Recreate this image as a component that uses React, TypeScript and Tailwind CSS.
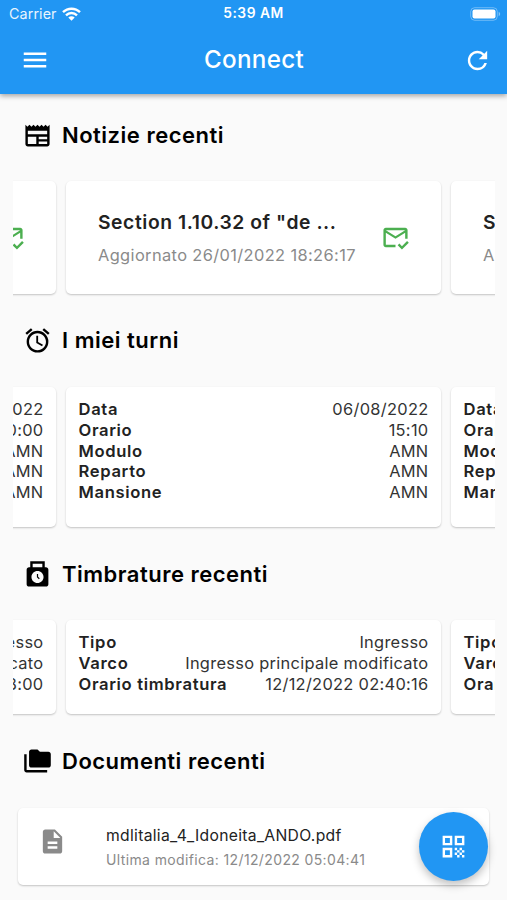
import React from "react";
import {
  MdAlarm,
  MdDescription,
  MdFolderCopy,
  MdMenu,
  MdNewspaper,
  MdOutlineMarkEmailRead,
  MdPunchClock,
  MdQrCode,
  MdRefresh,
} from "react-icons/md";

interface Row {
  label: string;
  value: string;
}

interface News {
  title: string;
  updated: string;
}

const news: News[] = [
  { title: 'Section 1.10.32 of "de ...', updated: "Aggiornato 26/01/2022 18:26:17" },
  { title: 'Section 1.10.32 of "de ...', updated: "Aggiornato 26/01/2022 18:26:17" },
  { title: 'Section 1.10.32 of "de ...', updated: "Aggiornato 26/01/2022 18:26:17" },
];

const makeShift = (date: string, time: string): Row[] => [
  { label: "Data", value: date },
  { label: "Orario", value: time },
  { label: "Modulo", value: "AMN" },
  { label: "Reparto", value: "AMN" },
  { label: "Mansione", value: "AMN" },
];

const makeStamp = (time: string): Row[] => [
  { label: "Tipo", value: "Ingresso" },
  { label: "Varco", value: "Ingresso principale modificato" },
  { label: "Orario timbratura", value: time },
];

const shifts = [makeShift("05/08/2022", "20:00"), makeShift("06/08/2022", "15:10"), makeShift("07/08/2022", "15:10")];
const stamps = [makeStamp("12/12/2022 02:48:00"), makeStamp("12/12/2022 02:40:16"), makeStamp("12/12/2022 02:38:00")];

const cardClasses = "bg-white rounded-[5px] shadow-[0_1px_2px_rgba(0,0,0,0.22)]";

function StatusBar() {
  return (
    <div className="grid grid-cols-3 items-center h-[27px] pl-[9px] pr-[6px] text-[14px] leading-none">
      <div className="flex items-center gap-[5px] pt-px">
        <span className="tracking-[0.1px] text-[14.3px] opacity-90">Carrier</span>
        <svg width="19" height="14" viewBox="0 0 19 14" fill="none" stroke="currentColor" strokeWidth="2.4">
          <path d="M1 5.2C5.8.5 13.2.5 18 5.2" />
          <path d="M4 8.3c3.1-3 7.900-3 11 0" />
          <path d="M9.500 13.700 6.300 10.500c1.800-1.700 4.600-1.700 6.400 0z" fill="currentColor" stroke="none" />
        </svg>
      </div>
      <span className="-ml-[3px] pt-px text-center font-semibold text-[13.8px] tracking-[0.5px]">5:39 AM</span>
      <div className="flex justify-end">
        <svg width="31" height="14" viewBox="0 0 31 14" fill="none">
          <rect x="0.700" y="0.700" width="26.600" height="12.600" rx="4" stroke="white" strokeOpacity="0.35" />
          <rect x="2.500" y="2.500" width="23" height="9" rx="2" fill="white" />
          <path d="M28.700 4.800c2 .8 2 3.600 0 4.400z" fill="white" fillOpacity="0.45" />
        </svg>
      </div>
    </div>
  );
}

function SectionTitle({ icon, children }: { icon: React.ReactNode; children: React.ReactNode }) {
  return (
    <div className="flex items-center gap-[10px] h-8 pl-[23px] text-black">
      {icon}
      <h2 className="text-[22px] leading-8 font-semibold tracking-[0.5px] whitespace-nowrap">{children}</h2>
    </div>
  );
}

function Carousel({ children }: { children: React.ReactNode }) {
  return <div className="flex justify-center gap-[10px] mx-[12.5px] pt-1 pb-1 overflow-hidden">{children}</div>;
}

function NewsCard({ title, updated }: News) {
  return (
    <div className={`${cardClasses} w-[375px] h-[113px] shrink-0 flex items-center justify-between pl-8 pr-[31px]`}>
      <div className="whitespace-nowrap pt-px">
        <p className="text-[19.3px] leading-6 font-semibold tracking-[0.57px]">{title}</p>
        <p className="mt-[11px] text-[16.4px] leading-[21px] tracking-[0.38px] text-[#8a8a8a]">{updated}</p>
      </div>
      <MdOutlineMarkEmailRead size={29} className="text-[#4caf50]" />
    </div>
  );
}

function RowsCard({ rows, className }: { rows: Row[]; className: string }) {
  return (
    <div className={`${cardClasses} ${className} w-[375px] shrink-0 px-[12.5px] pt-3`}>
      {rows.map((row) => (
        <div key={row.label} className="flex justify-between text-[16.4px] leading-[20.75px] whitespace-nowrap">
          <span className="text-[16.6px] font-semibold tracking-[0.66px]">{row.label}</span>
          <span className="tracking-[0.3px] text-[#333]">{row.value}</span>
        </div>
      ))}
    </div>
  );
}

export default function App() {
  return (
    <div className="relative w-[507px] h-[900px] overflow-hidden bg-[#fafafa] text-[#222] font-['Inter',sans-serif]">
      <header className="relative h-[94px] bg-[#2196f3] text-white shadow-[0_2px_5px_rgba(0,0,0,0.35)]">
        <StatusBar />
        <div className="flex items-center justify-between h-[66px] pl-5 pr-[15px]">
          <MdMenu size={30} />
          <h1 className="-ml-[5px] text-[24.2px] font-medium tracking-[0.3px]">Connect</h1>
          <MdRefresh size={29} />
        </div>
      </header>

      <main>
        <section className="pt-[25px]">
          <SectionTitle icon={<MdNewspaper size={29} />}>Notizie recenti</SectionTitle>
          <div className="pt-[26px]">
            <Carousel>
              {news.map((item, idx) => (
                <NewsCard key={idx} {...item} />
              ))}
            </Carousel>
          </div>
        </section>

        <section className="pt-[26px]">
          <SectionTitle icon={<MdAlarm size={29} />}>I miei turni</SectionTitle>
          <div className="pt-[27px]">
            <Carousel>
              {shifts.map((rows, idx) => (
                <RowsCard key={idx} rows={rows} className="h-[140px]" />
              ))}
            </Carousel>
          </div>
        </section>

        <section className="pt-[27px]">
          <SectionTitle icon={<MdPunchClock size={29} />}>Timbrature recenti</SectionTitle>
          <div className="pt-[26px]">
            <Carousel>
              {stamps.map((rows, idx) => (
                <RowsCard key={idx} rows={rows} className="h-[94px]" />
              ))}
            </Carousel>
          </div>
        </section>

        <section className="pt-[27px]">
          <SectionTitle icon={<MdFolderCopy size={29} />}>Documenti recenti</SectionTitle>
          <div className={`${cardClasses} flex items-start mx-[18px] mt-[31px] h-[77px] pl-5 pt-[18px]`}>
            <MdDescription size={29} className="mt-px text-[#8a8a8a]" />
            <div className="ml-[39px] whitespace-nowrap">
              <p className="text-[15.7px] leading-5 tracking-[0.3px]">mdlitalia_4_Idoneita_ANDO.pdf</p>
              <p className="mt-[5px] text-[14px] leading-[18px] tracking-[0.37px] text-[#8a8a8a]">
                Ultima modifica: 12/12/2022 05:04:41
              </p>
            </div>
          </div>
        </section>
      </main>

      <button
        aria-label="QR"
        className="absolute left-[419px] top-[812px] size-[68.5px] rounded-full bg-[#2196f3] text-white flex items-center justify-center shadow-[0_4px_8px_rgba(0,0,0,0.25)]"
      >
        <MdQrCode size={29} />
      </button>
    </div>
  );
}
